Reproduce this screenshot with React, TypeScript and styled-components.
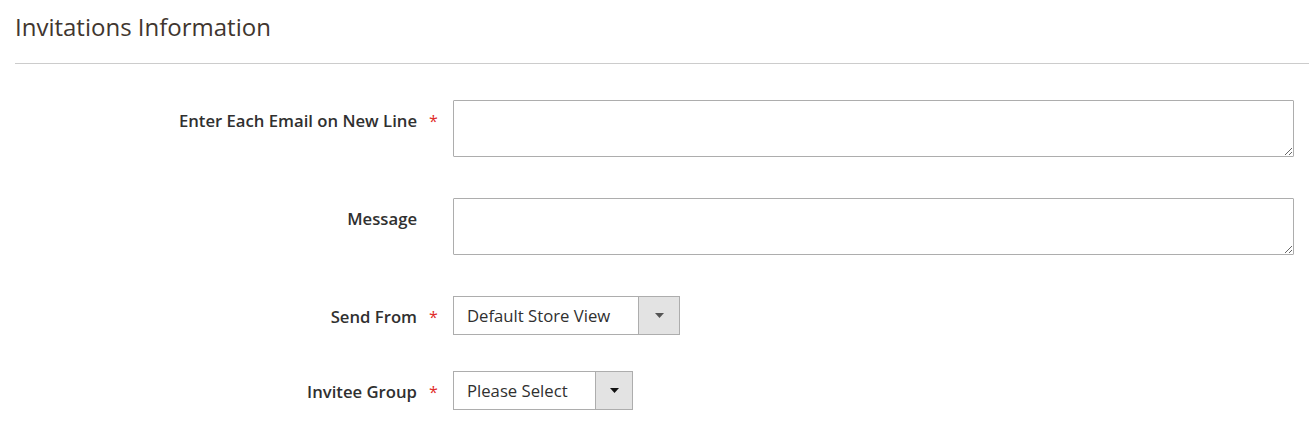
import styled, { createGlobalStyle } from 'styled-components';

const GlobalStyle = createGlobalStyle`
  html, body {
    margin: 0;
    padding: 0;
    background: #ffffff;
    font-family: 'Open Sans', 'Liberation Sans', sans-serif;
  }
`;

interface SelectProps {
  width: number;
}

const fields = [
  { label: 'Enter Each Email on New Line', required: true, type: 'textarea' },
  { label: 'Message', required: false, type: 'textarea' },
  { label: 'Send From', required: true, type: 'select', value: 'Default Store View', width: 227, btn: 41, arrow: '#555' },
  { label: 'Invitee Group', required: true, type: 'select', value: 'Please Select', width: 180, btn: 37, arrow: '#111' },
];

function App() {
  return (
    <Wrap>
      <GlobalStyle />
      <Title>Invitations Information</Title>
      <Form>
        {fields.map((f) => (
          <Row key={f.label} gap={f.type === 'textarea' ? 41 : 36}>
            <Label>
              <span>{f.label}</span>
              <Star>{f.required ? '*' : ''}</Star>
            </Label>
            {f.type === 'textarea' ? (
              <TextArea />
            ) : (
              <Select width={f.width || 180}>
                <span>{f.value}</span>
                <Arrow btn={f.btn || 40}>
                  <svg width="9" height="5" viewBox="0 0 9 5">
                    <path d="M0 0 H9 L4.5 5 Z" fill={f.arrow} />
                  </svg>
                </Arrow>
              </Select>
            )}
          </Row>
        ))}
      </Form>
    </Wrap>
  );
}
export default App;

const Wrap = styled.div`
  width: 1309px;
  padding-left: 15px;
  box-sizing: border-box;
`;

const Title = styled.div`
  font-size: 24px;
  font-weight: 400;
  color: #41362f;
  line-height: 30px;
  padding-top: 12px;
  padding-bottom: 21px;
  border-bottom: 1px solid #cccccc;
`;

const Form = styled.div`
  padding-top: 36px;
`;

const Row = styled.div<{ gap: number }>`
  display: flex;
  align-items: flex-start;
  margin-bottom: ${(p) => p.gap}px;
`;

const Label = styled.label`
  width: 438px;
  display: flex;
  justify-content: flex-end;
  padding-top: 10px;
  box-sizing: border-box;
  font-size: 16.7px;
  font-weight: 600;
  color: #303030;
  line-height: 22px;
`;

const Star = styled.span`
  width: 36px;
  color: #e02b27;
  font-size: 16px;
  font-weight: 400;
  text-align: left;
  padding-left: 12px;
  box-sizing: border-box;
`;

const TextArea = styled.textarea`
  width: 841px;
  height: 57px;
  box-sizing: border-box;
  border: 1px solid #adadad;
  border-radius: 1px;
  margin: 0;
  padding: 6px 10px;
  font-family: inherit;
  font-size: 16px;
  resize: vertical;
  outline: none;
`;

const Select = styled.div<SelectProps>`
  width: ${(p) => p.width}px;
  height: 39px;
  box-sizing: border-box;
  border: 1px solid #adadad;
  display: flex;
  align-items: center;
  font-size: 16.7px;
  color: #303030;
  span {
    flex: 1;
    padding-left: 13px;
    white-space: nowrap;
  }
`;

const Arrow = styled.div<{ btn: number }>`
  width: ${(p) => p.btn}px;
  height: 100%;
  flex-shrink: 0;
  box-sizing: border-box;
  background: #e3e3e3;
  border-left: 1px solid #adadad;
  display: flex;
  align-items: center;
  justify-content: center;
`;
